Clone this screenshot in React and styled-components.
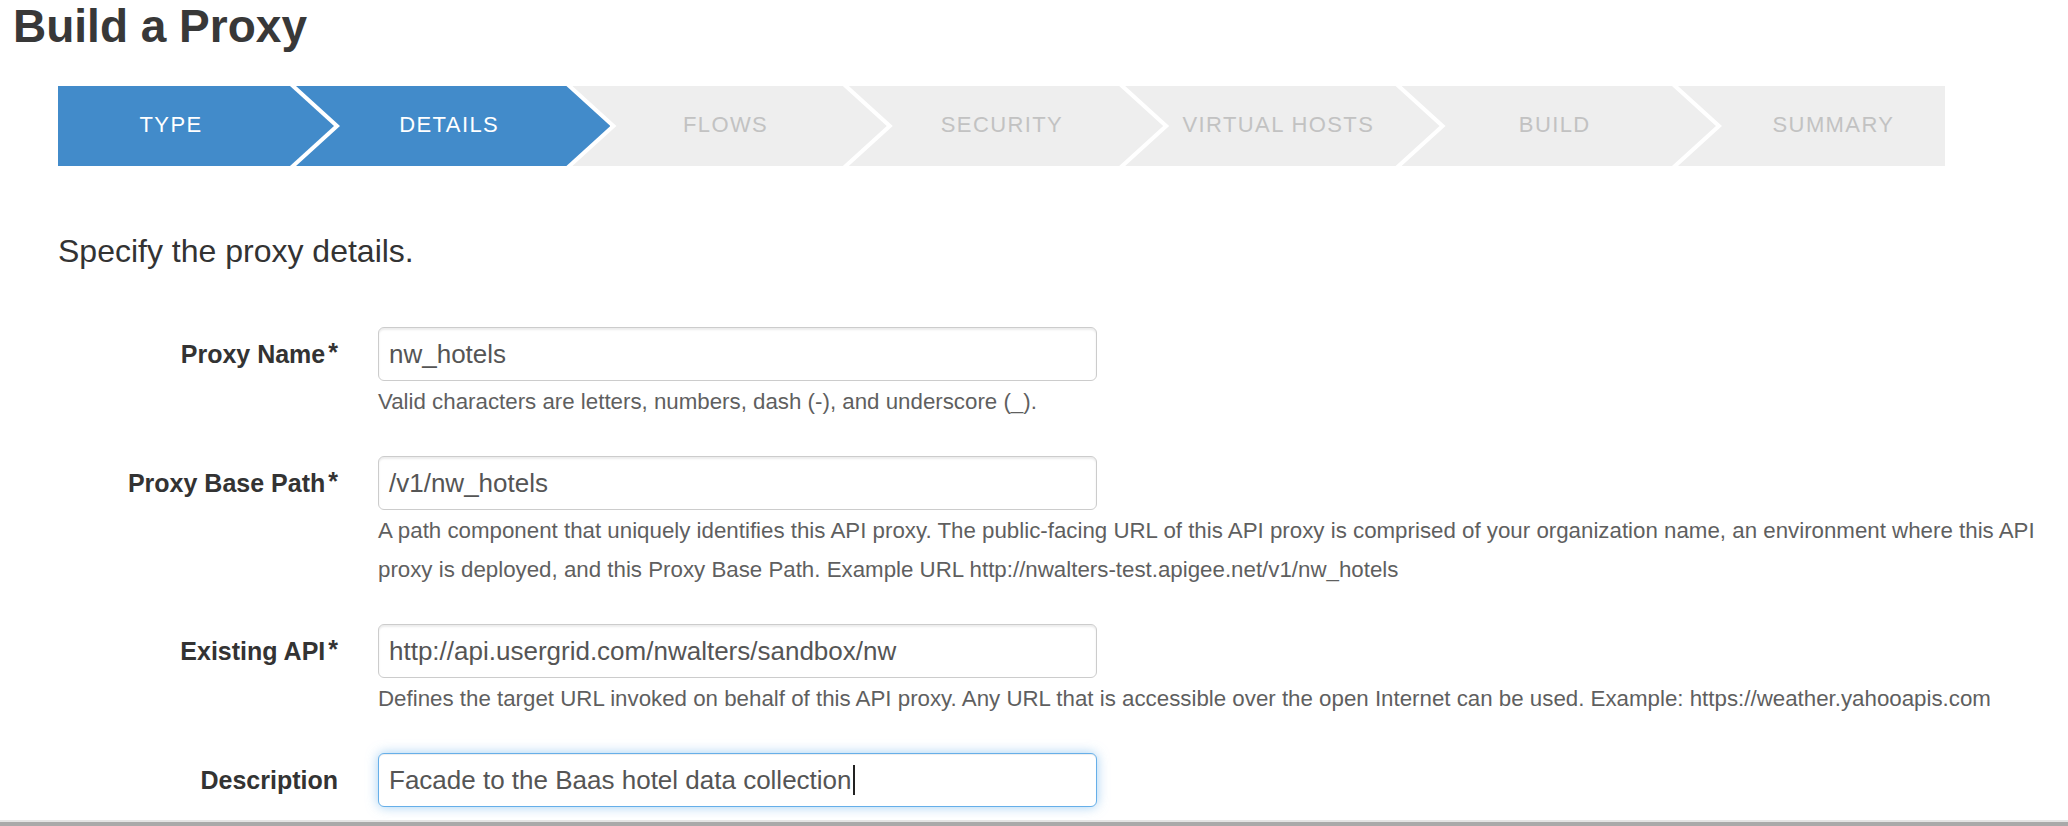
import React from 'react';
import styled, { createGlobalStyle, css } from 'styled-components';

const GlobalStyle = createGlobalStyle`
  html, body {
    margin: 0;
    padding: 0;
    background: #ffffff;
  }
  body {
    font-family: "Liberation Sans", Arial, sans-serif;
    color: #333333;
  }
`;

const Page = styled.div`
  display: flex;
  flex-direction: column;
  height: 100vh;
  overflow: hidden;
`;

const Main = styled.main`
  flex: 1;
  padding-top: 1px;
`;

const Title = styled.h1`
  margin: 0 0 0 13px;
  font-size: 46px;
  line-height: 50px;
  font-weight: 700;
  color: #383838;
`;

const Wizard = styled.ol`
  display: flex;
  list-style: none;
  margin: 35px 0 0 58px;
  padding: 0;
  width: 1887px;
  height: 80px;
`;

const blue = '#428bca';

const Step = styled.li`
  display: flex;
  align-items: center;
  justify-content: center;
  box-sizing: border-box;
  height: 80px;
  flex: 0 0 314.4px;
  margin-right: -38px;
  padding: 0 44px 2px 36px;
  background: ${(p) => (p.$active ? blue : '#eeeeee')};
  color: ${(p) => (p.$active ? '#ffffff' : '#c2c2c2')};
  font-size: 22px;
  letter-spacing: 1.4px;
  text-transform: uppercase;
  white-space: nowrap;
  clip-path: polygon(0 0, calc(100% - 44px) 0, 100% 50%, calc(100% - 44px) 100%, 0 100%, 44px 50%);

  ${(p) =>
    p.$first &&
    css`
      flex-basis: 276px;
      padding: 0 50px 2px 0;
      clip-path: polygon(0 0, calc(100% - 44px) 0, 100% 50%, calc(100% - 44px) 100%, 0 100%);
    `}

  ${(p) =>
    p.$last &&
    css`
      flex-basis: 267px;
      margin-right: 0;
      padding: 0 0 2px 44px;
      clip-path: polygon(0 0, 100% 0, 100% 100%, 0 100%, 44px 50%);
    `}
`;

const Intro = styled.p`
  margin: 65px 0 0 58px;
  font-size: 32px;
  line-height: 40px;
  color: #333333;
`;

const Form = styled.form`
  margin-top: 56px;
  padding-right: 8px;
`;

const Row = styled.div`
  display: grid;
  grid-template-columns: 338px 1fr;
  column-gap: 40px;
  margin-bottom: 35px;

  &:last-child {
    margin-bottom: 0;
  }
`;

const Label = styled.label`
  display: flex;
  align-items: center;
  justify-content: flex-end;
  height: 54px;
  font-size: 25px;
  font-weight: 700;
  color: #333333;
  white-space: nowrap;
`;

const Req = styled.span`
  align-self: flex-start;
  margin: 13px 0 0 3px;
  font-size: 25px;
  line-height: 25px;
`;

const Control = styled.div`
  min-width: 0;
`;

const Field = styled.div`
  display: flex;
  align-items: center;
  box-sizing: border-box;
  width: 719px;
  height: 54px;
  padding: 0 10px;
  border: 1px solid ${(p) => (p.$focused ? '#66afe9' : '#cccccc')};
  border-radius: 6px;
  background: #ffffff;
  font-size: 26px;
  color: #555555;
  white-space: nowrap;
  box-shadow: ${(p) =>
    p.$focused
      ? 'inset 0 1px 1px rgba(0,0,0,.075), 0 0 12px rgba(102,175,233,.6)'
      : 'inset 0 2px 2px rgba(0,0,0,.08)'};
`;

const Caret = styled.span`
  display: inline-block;
  width: 2px;
  height: 30px;
  margin-left: 1px;
  background: #222222;
`;

const Help = styled.p`
  margin: 1px 0 0;
  font-size: 22.3px;
  line-height: 39px;
  color: #5f5f5f;
  white-space: nowrap;
`;

const Footer = styled.footer`
  flex: 0 0 4px;
  border-top: 2px solid #e4e4e4;
  background: #a9a9a9;
`;

const steps = ['Type', 'Details', 'Flows', 'Security', 'Virtual Hosts', 'Build', 'Summary'];

export default function App() {
  return (
    <Page>
      <GlobalStyle />
      <Main>
        <Title>Build a Proxy</Title>

        <Wizard>
          {steps.map((s, i) => (
            <Step key={s} $active={i < 2} $first={i === 0} $last={i === steps.length - 1}>
              {s}
            </Step>
          ))}
        </Wizard>

        <Intro>Specify the proxy details.</Intro>

        <Form onSubmit={(e) => e.preventDefault()}>
          <Row>
            <Label>
              Proxy Name<Req>*</Req>
            </Label>
            <Control>
              <Field>nw_hotels</Field>
              <Help>Valid characters are letters, numbers, dash (-), and underscore (_).</Help>
            </Control>
          </Row>

          <Row>
            <Label>
              Proxy Base Path<Req>*</Req>
            </Label>
            <Control>
              <Field>/v1/nw_hotels</Field>
              <Help>
                A path component that uniquely identifies this API proxy. The public-facing URL of this API proxy is
                comprised of your organization name, an environment where this API
                <br />
                proxy is deployed, and this Proxy Base Path. Example URL http://nwalters-test.apigee.net/v1/nw_hotels
              </Help>
            </Control>
          </Row>

          <Row>
            <Label>
              Existing API<Req>*</Req>
            </Label>
            <Control>
              <Field>http://api.usergrid.com/nwalters/sandbox/nw</Field>
              <Help>
                Defines the target URL invoked on behalf of this API proxy. Any URL that is accessible over the open
                Internet can be used. Example: https://weather.yahooapis.com
              </Help>
            </Control>
          </Row>

          <Row>
            <Label>Description</Label>
            <Control>
              <Field $focused>
                Facade to the Baas hotel data collection
                <Caret />
              </Field>
            </Control>
          </Row>
        </Form>
      </Main>
      <Footer />
    </Page>
  );
}
